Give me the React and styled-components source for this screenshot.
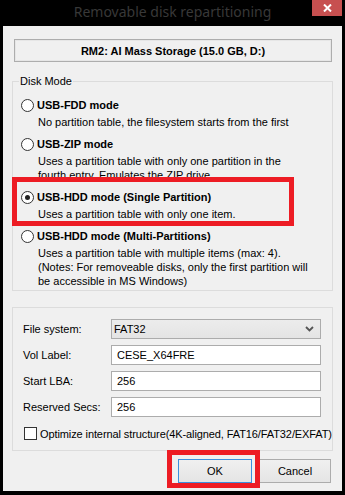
import React from "react";
import styled, { createGlobalStyle } from "styled-components";

const GlobalStyle = createGlobalStyle`
  html, body {
    margin: 0;
    padding: 0;
    background: #000;
  }
  body {
    font-family: "Liberation Sans", Arial, sans-serif;
    font-size: 11px;
    color: #000;
  }
`;

const Window = styled.div`
  width: 345px;
  height: 495px;
  background: #000;
  display: flex;
  flex-direction: column;
`;

const TitleBar = styled.div`
  height: 26px;
  display: grid;
  grid-template-columns: 1fr auto 1fr;
`;

const Title = styled.div`
  grid-column: 2;
  font-family: "Noto Sans", "Open Sans", sans-serif;
  font-size: 14px;
  line-height: 24px;
  color: #383838;
  white-space: nowrap;
`;

const CloseButton = styled.div`
  grid-column: 3;
  justify-self: end;
  align-self: start;
  width: 30px;
  height: 16px;
  margin-right: 3px;
  background: #c75050;
  display: flex;
  align-items: center;
  justify-content: center;
`;

const Body = styled.div`
  position: relative;
  margin: 0 3px;
  height: 465px;
  box-sizing: border-box;
  background: #f0f0f0;
  padding: 13px 9px 0 9px;
  display: flex;
  flex-direction: column;
`;

const DeviceHeader = styled.div`
  margin: 0 1px 0 2px;
  height: 23px;
  box-sizing: border-box;
  border: 1px solid #adadad;
  box-shadow: inset 0 0 0 1px #e6e6e6;
  display: flex;
  align-items: center;
  justify-content: center;
  font-weight: bold;
  font-size: 11px;
`;

const GroupBox = styled.fieldset`
  margin: 13px 0 0;
  padding: 9px 0 2px 8px;
  border: 1px solid #dcdcdc;
  min-width: 0;
`;

const Legend = styled.legend`
  padding: 0 1px;
  margin-left: -2px;
  line-height: 13px;
  font-size: 11px;
`;

const OptionList = styled.div`
  display: flex;
  flex-direction: column;
  gap: 7px;
`;

const Option = styled.div`
  display: grid;
  grid-template-columns: 13px 1fr;
  column-gap: 3px;
  align-items: center;
`;

const Radio = styled.span`
  width: 13px;
  height: 13px;
  box-sizing: border-box;
  border-radius: 50%;
  border: 1px solid #333;
  background: #fff;
  display: flex;
  align-items: center;
  justify-content: center;

  &::after {
    content: "";
    width: 5px;
    height: 5px;
    border-radius: 50%;
    background: ${(p) => (p.$checked ? "#222" : "transparent")};
  }
`;

const OptionTitle = styled.div`
  font-weight: bold;
  line-height: 16px;
  white-space: nowrap;
`;

const OptionDesc = styled.div`
  grid-column: 2;
  margin: 2px 0 0 1px;
  line-height: 14px;
  white-space: nowrap;
`;

const FieldsBox = styled.div`
  margin-top: 16px;
  border: 1px solid #dcdcdc;
  padding: 11px 11px 10px 10px;
  display: grid;
  grid-template-columns: 88px 1fr;
  row-gap: 6px;
  align-items: center;
`;

const FieldLabel = styled.div`
  line-height: 20px;
`;

const Select = styled.div`
  height: 20px;
  box-sizing: border-box;
  border: 1px solid #acacac;
  background: linear-gradient(#ececec, #e4e4e4);
  display: flex;
  align-items: center;
  justify-content: space-between;
  padding: 0 6px 0 2px;
`;

const TextInput = styled.div`
  height: 20px;
  box-sizing: border-box;
  border: 1px solid #acacac;
  background: #fff;
  display: flex;
  align-items: center;
  padding-left: 5px;
`;

const CheckRow = styled.div`
  grid-column: 1 / span 2;
  margin: 4px 0 0 1px;
  display: flex;
  align-items: center;
  gap: 3px;
  height: 13px;
  white-space: nowrap;
  letter-spacing: -0.1px;
`;

const CheckBox = styled.span`
  width: 13px;
  height: 13px;
  box-sizing: border-box;
  border: 1px solid #333;
  background: #fff;
  flex: none;
`;

const ButtonRow = styled.div`
  margin: 8px 2px 0 0;
  display: flex;
  justify-content: flex-end;
  gap: 7px;
`;

const Button = styled.div`
  width: ${(p) => p.$width}px;
  height: 24px;
  box-sizing: border-box;
  border: 1px solid ${(p) => (p.$default ? "#3c8fdc" : "#acacac")};
  background: linear-gradient(#f0f0f0, #e5e5e5);
  display: flex;
  align-items: center;
  justify-content: center;
`;

const Highlight = styled.div`
  position: absolute;
  left: ${(p) => p.$left}px;
  top: ${(p) => p.$top}px;
  width: ${(p) => p.$width}px;
  height: ${(p) => p.$height}px;
  box-sizing: border-box;
  border: 5px solid #ed1c24;
  pointer-events: none;
`;

const modes = [
  {
    title: "USB-FDD mode",
    lines: ["No partition table, the filesystem starts from the first"],
  },
  {
    title: "USB-ZIP mode",
    lines: [
      "Uses a partition table with only one partition in the",
      "fourth entry. Emulates the ZIP drive.",
    ],
  },
  {
    title: "USB-HDD mode (Single Partition)",
    lines: ["Uses a partition table with only one item."],
    checked: true,
  },
  {
    title: "USB-HDD mode (Multi-Partitions)",
    lines: [
      "Uses a partition table with multiple items (max: 4).",
      "(Notes: For removeable disks, only the first partition will",
      "be accessible in MS Windows)",
    ],
  },
];

const fields = [
  { label: "Vol Label:", value: "CESE_X64FRE" },
  { label: "Start LBA:", value: "256" },
  { label: "Reserved Secs:", value: "256" },
];

export default function App() {
  return (
    <Window>
      <GlobalStyle />
      <TitleBar>
        <Title>Removable disk repartitioning</Title>
        <CloseButton>
          <svg width="9" height="8" viewBox="0 0 9 8">
            <path d="M1 0.5 L8 7.5 M8 0.5 L1 7.5" stroke="#fff" strokeWidth="2" />
          </svg>
        </CloseButton>
      </TitleBar>

      <Body>
        <DeviceHeader>RM2: AI Mass Storage (15.0 GB, D:)</DeviceHeader>

        <GroupBox>
          <Legend>Disk Mode</Legend>
          <OptionList>
            {modes.map((m) => (
              <Option key={m.title}>
                <Radio $checked={m.checked} />
                <OptionTitle>{m.title}</OptionTitle>
                <OptionDesc>
                  {m.lines.map((l) => (
                    <div key={l}>{l}</div>
                  ))}
                </OptionDesc>
              </Option>
            ))}
          </OptionList>
        </GroupBox>

        <FieldsBox>
          <FieldLabel>File system:</FieldLabel>
          <Select>
            <span>FAT32</span>
            <svg width="9" height="6" viewBox="0 0 9 6">
              <path d="M1 1 L4.5 4.5 L8 1" stroke="#555" strokeWidth="1.8" fill="none" />
            </svg>
          </Select>
          {fields.map((f) => (
            <React.Fragment key={f.label}>
              <FieldLabel>{f.label}</FieldLabel>
              <TextInput>{f.value}</TextInput>
            </React.Fragment>
          ))}
          <CheckRow>
            <CheckBox />
            <span>Optimize internal structure(4K-aligned, FAT16/FAT32/EXFAT)</span>
          </CheckRow>
        </FieldsBox>

        <ButtonRow>
          <Button $width={74} $default>OK</Button>
          <Button $width={72}>Cancel</Button>
        </ButtonRow>

        <Highlight $left={9} $top={151} $width={282} $height={49} />
        <Highlight $left={164} $top={424} $width={93} $height={38} />
      </Body>
    </Window>
  );
}
